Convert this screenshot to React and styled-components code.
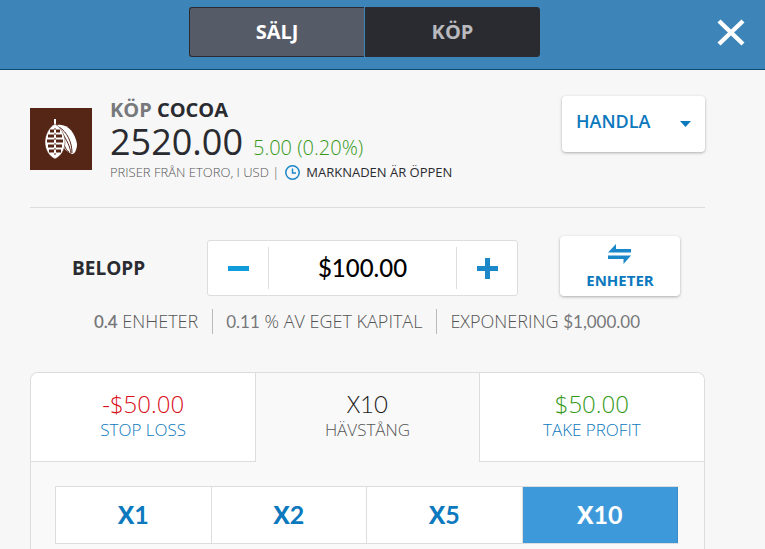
import React, { useState } from 'react';
import styled, { createGlobalStyle } from 'styled-components';

const GlobalStyle = createGlobalStyle`
  * {
    box-sizing: border-box;
  }
  body {
    margin: 0;
    background: #f7f7f7;
    font-family: 'Open Sans', sans-serif;
    color: #2a2b30;
  }
  button, input, select {
    font-family: inherit;
    margin: 0;
    padding: 0;
    border: none;
    background: none;
    cursor: pointer;
  }
`;

const Page = styled.div`
  min-height: 100vh;
  display: flex;
  flex-direction: column;
`;

const Header = styled.header`
  display: grid;
  grid-template-columns: 1fr 351px 1fr;
  align-items: center;
  height: 70px;
  padding: 0 36px 6px 0;
  background: #3d85b8;
  border-bottom: 1px solid #0f4a75;
`;

const Toggle = styled.div`
  grid-column: 2;
  display: grid;
  grid-template-columns: 1fr 1fr;
  gap: 1px;
  height: 50px;
`;

const ToggleButton = styled.button`
  font-size: 20px;
  line-height: 28px;
  font-weight: 700;
  color: ${({ $active }) => ($active ? '#b9babf' : '#fff')};
  background: ${({ $active }) => ($active ? '#2a2b30' : '#555b67')};
  border: 1px solid #2a2b30;
  border-radius: 3px 0 0 3px;
  &:first-child {
    border-right: none;
  }
  &:last-child {
    border-radius: 0 3px 3px 0;
  }
`;

const CloseButton = styled.button`
  justify-self: end;
  margin-right: -16px;
  width: 28px;
  height: 28px;
  svg {
    display: block;
  }
`;

const Content = styled.main`
  flex: 1;
  display: flex;
  flex-direction: column;
  padding: 26px 60px 0 30px;
`;

const Quote = styled.section`
  display: flex;
  align-items: flex-start;
  height: 112px;
  border-bottom: 1px solid #ddd;
`;

const Logo = styled.svg`
  flex: none;
  margin: 12px 18px 0 0;
`;

const QuoteInfo = styled.div`
  flex: 1;
`;

const Title = styled.h1`
  margin: 0;
  font-size: 20px;
  line-height: 28px;
  font-weight: 700;
  span {
    color: #77787b;
  }
`;

const PriceLine = styled.div`
  display: flex;
  align-items: baseline;
  gap: 10px;
  height: 36px;
`;

const Price = styled.span`
  font-size: 36px;
  line-height: 36px;
  font-weight: 500;
`;

const Change = styled.span`
  font-size: 20px;
  line-height: 24px;
  color: #359a1a;
  font-weight: 300;
`;

const Market = styled.div`
  display: flex;
  align-items: center;
  gap: 6px;
  font-size: 13px;
  line-height: 24px;
  font-weight: 300;
  color: #555;
  strong {
    font-weight: 400;
    color: #2a2b30;
  }
`;

const SelectBox = styled.div`
  position: relative;
  width: 143px;
  height: 56px;
  background: #fff;
  border-radius: 4px;
  box-shadow: 0 1px 3px rgba(0, 0, 0, 0.3);
  svg {
    position: absolute;
    right: 14px;
    top: 25px;
    pointer-events: none;
  }
`;

const Select = styled.select`
  appearance: none;
  width: 100%;
  height: 50px;
  padding-left: 14px;
  font-size: 18px;
  font-weight: 600;
  color: #0c78bd;
`;

const AmountRow = styled.section`
  display: flex;
  align-items: flex-end;
  padding: 28px 25px 0 42px;
`;

const Label = styled.label`
  flex: none;
  width: 135px;
  font-size: 19px;
  line-height: 56px;
  font-weight: 700;
`;

const Stepper = styled.div`
  flex: 1;
  min-width: 0;
  display: flex;
  align-items: center;
  height: 56px;
  background: #fff;
  border: 1px solid #ddd;
  border-radius: 3px;
`;

const StepButton = styled.button`
  flex: none;
  display: grid;
  place-items: center;
  width: 60px;
  height: 42px;
`;

const AmountInput = styled.input`
  flex: 1;
  min-width: 0;
  height: 42px;
  padding-bottom: 2px;
  border: solid #ddd;
  border-width: 0 1px;
  text-align: center;
  font-family: Lato, sans-serif;
  font-size: 24px;
  font-weight: 500;
  color: #000;
  cursor: text;
`;

const UnitsButton = styled.button`
  flex: none;
  display: flex;
  flex-direction: column;
  align-items: center;
  justify-content: flex-end;
  gap: 6px;
  width: 120px;
  height: 60px;
  padding-bottom: 6px;
  margin-left: 42px;
  background: #fff;
  border-radius: 4px;
  box-shadow: 0 1px 3px rgba(0, 0, 0, 0.3);
  font-size: 15px;
  line-height: 20px;
  font-weight: 700;
  color: #0c78bd;
`;

const Stats = styled.div`
  display: flex;
  justify-content: center;
  align-items: center;
  height: 50px;
  font-size: 18px;
  line-height: 24px;
  font-weight: 300;
  color: #555;
  white-space: nowrap;
`;

const Stat = styled.span`
  padding: 0 14px 0 13px;
  & + & {
    border-left: 1px solid #bbb;
  }
`;

const Digits = styled.span`
  font-family: Lato, sans-serif;
`;

const StatDigits = styled(Digits)`
  font-size: 17px;
  font-weight: ${({ $strong }) => ($strong ? 600 : 400)};
  color: #77787b;
`;

const Panel = styled.section`
  flex: 1;
  margin-top: 26px;
  border: 1px solid #ddd;
  border-bottom: none;
  border-radius: 8px 8px 0 0;
  background: #f9f9f9;
  overflow: hidden;
`;

const Tabs = styled.div`
  display: grid;
  grid-template-columns: repeat(3, 1fr);
`;

const Tab = styled.button`
  height: 89px;
  padding-bottom: 3px;
  background: ${({ $active }) => ($active ? '#f9f9f9' : '#fff')};
  border: solid #ddd;
  border-width: ${({ $active }) => ($active ? '0 1px' : '0 0 1px')};
  font-weight: 300;
`;

const TabValue = styled.div`
  font-size: 24px;
  line-height: 28px;
  color: ${({ $color }) => $color};
`;

const TabLabel = styled.div`
  font-size: 17px;
  line-height: 24px;
  color: ${({ $active }) => ($active ? '#555' : '#0c78bd')};
`;

const Levels = styled.div`
  display: grid;
  grid-template-columns: repeat(4, 1fr);
  margin: 24px 26px 4px 24px;
  border: 1px solid #ddd;
  border-right: none;
`;

const Level = styled.button`
  height: 56px;
  padding-bottom: 3px;
  font-size: 25px;
  line-height: 28px;
  font-weight: 700;
  color: ${({ $active }) => ($active ? '#fff' : '#0c78bd')};
  background: ${({ $active }) => ($active ? '#3e99db' : '#fff')};
  border-right: 1px solid ${({ $active }) => ($active ? '#3a8dc9' : '#ddd')};
`;

const CocoaLogo = () => (
  <Logo width="62" height="62" viewBox="0 0 62 62">
    <rect width="62" height="62" fill="#552516" />
    <path d="M27 17c10-2 18 7 20 19 0 5-2 10-5 10-4-2-7-4-8-6z" fill="#fff" />
    <path d="M29 19c8 5 13 15 13 26M32 25c5 7 8 14 9 20M34 36c1 4 3 7 5 8" stroke="#552516" strokeWidth="1" fill="none" />
    <path d="M25 11v8" stroke="#fff" strokeWidth="2" />
    <path d="M25 16c-6 3-10 11-10 18 0 8 4 14 10 17 6-3 10-9 10-17 0-7-4-15-10-18z" fill="#fff" stroke="#552516" strokeWidth="0.5" />
    <path d="M20 23h4m2 0h4M18 28h6m2 0h6M17 33h7m2 0h7M18 38h6m2 0h6M19 43h5m2 0h5" stroke="#552516" strokeWidth="2.8" />
    <path d="M25 20v29" stroke="#552516" strokeWidth="1" strokeDasharray="2 3" />
  </Logo>
);

const levels = ['1', '2', '5', '10'];

const App = () => {
  const [side, setSide] = useState('buy');
  const [amount, setAmount] = useState('$100.00');
  const [level, setLevel] = useState('10');
  const [tab, setTab] = useState('leverage');

  const step = (n) => {
    const value = Number(amount.replace(/[^0-9.]/g, '')) + n;
    setAmount('$' + Math.max(value, 0).toFixed(2));
  };

  return (
    <Page>
      <GlobalStyle />
      <Header>
        <Toggle>
          <ToggleButton $active={side === 'sell'} onClick={() => setSide('sell')}>SÄLJ</ToggleButton>
          <ToggleButton $active={side === 'buy'} onClick={() => setSide('buy')}>KÖP</ToggleButton>
        </Toggle>
        <CloseButton aria-label="Stäng">
          <svg width="28" height="28" viewBox="0 0 28 28">
            <path d="M2 3l24 23M26 3L2 26" stroke="#fff" strokeWidth="4.4" />
          </svg>
        </CloseButton>
      </Header>
      <Content>
        <Quote>
          <CocoaLogo />
          <QuoteInfo>
            <Title><span>KÖP</span> COCOA</Title>
            <PriceLine>
              <Price>2520.00</Price>
              <Change>5.00 (0.20%)</Change>
            </PriceLine>
            <Market>
              <span>PRISER FRÅN ETORO, I USD |</span>
              <svg width="15" height="15" viewBox="0 0 15 15" fill="none" stroke="#1c87c9">
                <circle cx="7.5" cy="7.5" r="6.7" strokeWidth="1.5" />
                <path d="M7.5 3.5v4.500H11" strokeWidth="1.5" />
              </svg>
              <strong>MARKNADEN ÄR ÖPPEN</strong>
            </Market>
          </QuoteInfo>
          <SelectBox>
            <Select aria-label="Ordertyp">
              <option>HANDLA</option>
            </Select>
            <svg width="11" height="6" viewBox="0 0 11 6"><path d="M0 0h11L5.500 6z" fill="#0c78bd" /></svg>
          </SelectBox>
        </Quote>

        <AmountRow>
          <Label htmlFor="amount">BELOPP</Label>
          <Stepper>
            <StepButton aria-label="Minska" onClick={() => step(-50)}>
              <svg width="21" height="21" viewBox="0 0 21 21"><path d="M0 8h21v5H0z" fill="#109bdb" /></svg>
            </StepButton>
            <AmountInput id="amount" value={amount} onChange={(e) => setAmount(e.target.value)} />
            <StepButton aria-label="Öka" onClick={() => step(50)}>
              <svg width="21" height="21" viewBox="0 0 21 21"><path d="M0 8h8V0h5v8h8v5h-8v8H8v-8H0z" fill="#1c87c9" /></svg>
            </StepButton>
          </Stepper>
          <UnitsButton>
            <svg width="24" height="20" viewBox="0 0 24 20">
              <path d="M0 8.500L8 0v5h15v3.500zM0 11.500h23L15.500 20v-5H0z" fill="#1c87c9" />
            </svg>
            ENHETER
          </UnitsButton>
        </AmountRow>
        <Stats>
          <Stat><StatDigits $strong>0.4</StatDigits> ENHETER</Stat>
          <Stat><StatDigits>0.11</StatDigits> % AV EGET KAPITAL</Stat>
          <Stat>EXPONERING <StatDigits>$1,000.00</StatDigits></Stat>
        </Stats>

        <Panel>
          <Tabs>
            <Tab $active={tab === 'stop'} onClick={() => setTab('stop')}>
              <TabValue $color="#d8101c">-$50.00</TabValue>
              <TabLabel $active={tab === 'stop'}>STOP LOSS</TabLabel>
            </Tab>
            <Tab $active={tab === 'leverage'} onClick={() => setTab('leverage')}>
              <TabValue $color="#1a1b20">X<Digits>{level}</Digits></TabValue>
              <TabLabel $active={tab === 'leverage'}>HÄVSTÅNG</TabLabel>
            </Tab>
            <Tab $active={tab === 'profit'} onClick={() => setTab('profit')}>
              <TabValue $color="#359a1a">$50.00</TabValue>
              <TabLabel $active={tab === 'profit'}>TAKE PROFIT</TabLabel>
            </Tab>
          </Tabs>
          <Levels>
            {levels.map((item) => (
              <Level key={item} $active={item === level} onClick={() => setLevel(item)}>
                X<Digits>{item}</Digits>
              </Level>
            ))}
          </Levels>
        </Panel>
      </Content>
    </Page>
  );
};

export default App;
